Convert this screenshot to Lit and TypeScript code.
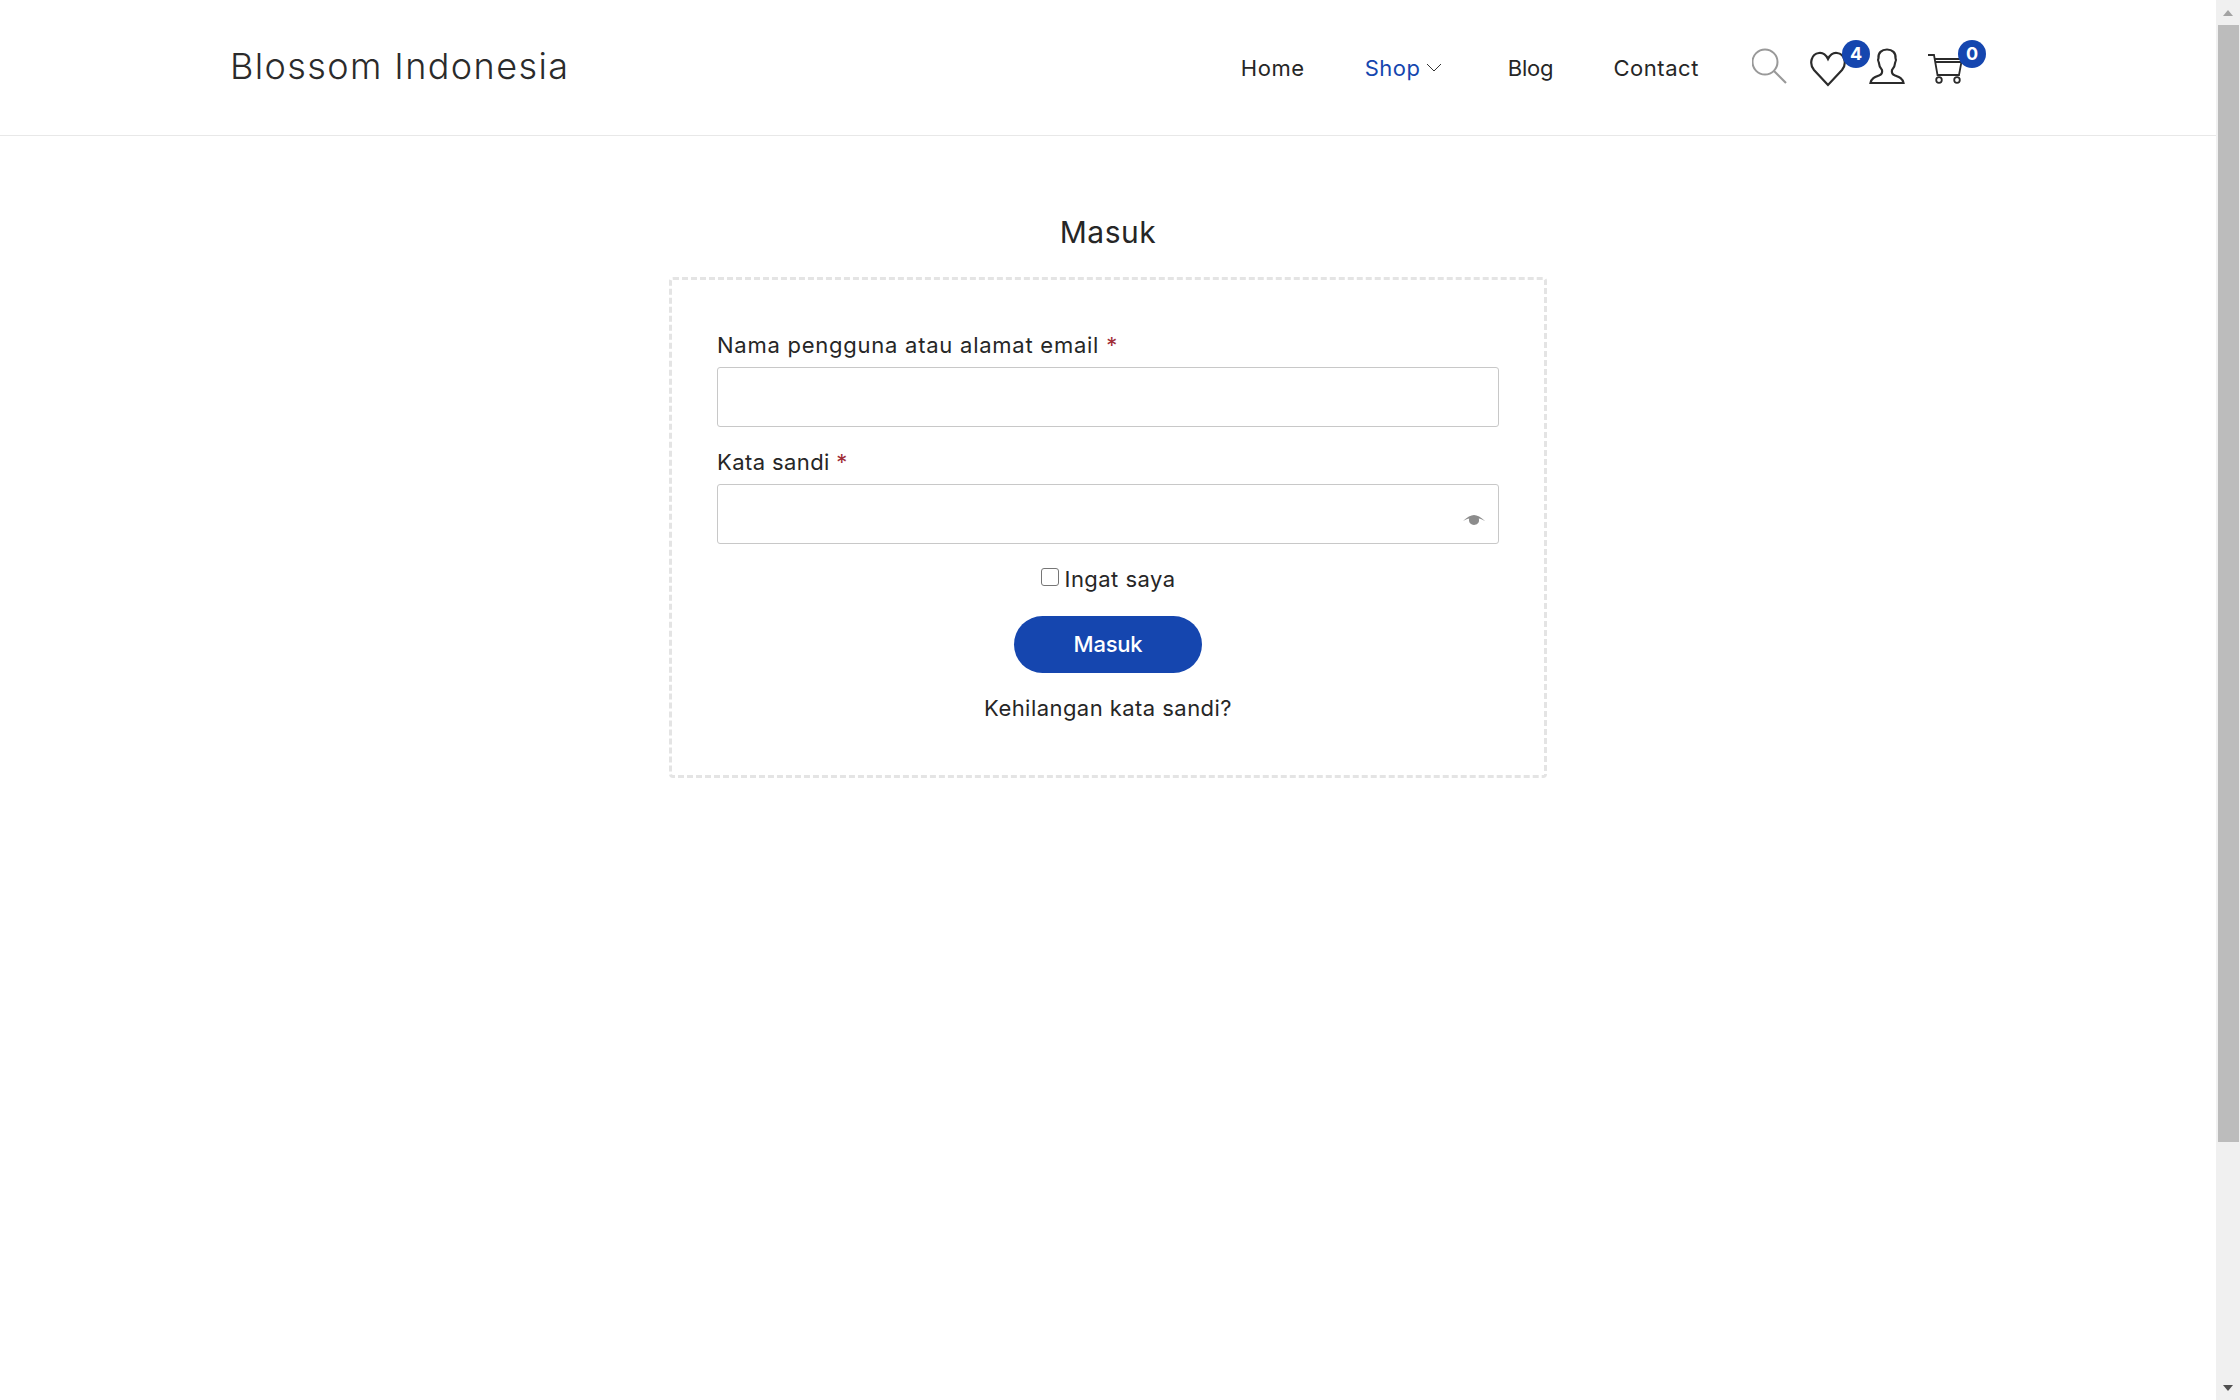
import { LitElement, html, css } from "lit";
import { customElement } from "lit/decorators.js";

@customElement("app-root")
export class AppRoot extends LitElement {
  static styles = css`
    :host { display: flex; width: 2240px; height: 1400px; overflow: hidden; background: #fff; color: #262626; font-family: Inter, "Open Sans", sans-serif; font-size: 22px; font-weight: 400; }
    .page { flex: 1; min-width: 0; display: flex; flex-direction: column; }
    header { height: 135px; border-bottom: 1px solid #e8e8e8; display: flex; align-items: center; justify-content: space-between; padding: 0 253px 0 230px; }
    .logo { font-size: 36px; font-weight: 350; letter-spacing: 1.4px; color: #2b2b2b; margin-top: -3px; }
    .right { display: flex; align-items: center; }
    nav { display: flex; align-items: center; }
    nav a { padding: 0 30px; letter-spacing: 0.55px; display: flex; align-items: center; }
    nav a.on { color: #1546af; }
    nav a.tight { letter-spacing: -0.15px; }
    .chev { margin-left: 5px; margin-right: 6px; display: block; }
    .icons { display: flex; align-items: flex-start; margin-left: 23px; height: 40px; }
    .ic { position: relative; display: block; }
    .heart { width: 36px; margin-left: 22px; }
    .person { margin-left: 23px; }
    .cart { width: 36px; margin-left: 22px; }
    .ic svg { display: block; }
    .badge { position: absolute; top: -8px; width: 28px; height: 28px; border-radius: 50%; background: #1546af; color: #fff; font-size: 18px; font-weight: 700; display: flex; align-items: center; justify-content: center; }
    .heart .badge { left: 32px; }
    .cart .badge { left: 31px; }
    main { display: flex; flex-direction: column; align-items: center; padding-top: 76px; }
    h1 { margin: 0 0 25px; font-size: 30px; line-height: 40px; font-weight: 400; letter-spacing: 0.5px; }
    .box { width: 878px; box-sizing: border-box; border: 3px dashed #e4e4e4; border-radius: 4px; padding: 48px 45px 49px; display: flex; flex-direction: column; }
    label { display: block; line-height: 34px; margin-bottom: 5px; letter-spacing: 0.75px; }
    label.tight { letter-spacing: 0.4px; }
    label b { color: #a02c35; font-weight: 400; }
    .field { position: relative; height: 60px; box-sizing: border-box; border: 1px solid #c8c8c8; border-radius: 3px; margin-bottom: 18px; background: #fff; }
    .eye { position: absolute; right: 13px; top: 30px; display: block; }
    .remember { display: flex; align-items: center; justify-content: center; line-height: 34px; gap: 6px; letter-spacing: 0.45px; margin-bottom: -1px; }
    .cb { width: 18px; height: 18px; box-sizing: border-box; border: 1.5px solid #767676; border-radius: 3px; margin-top: -4px; background: #fff; }
    .btn { align-self: center; margin-top: 21px; width: 188px; height: 57px; box-sizing: border-box; padding-bottom: 2px; border-radius: 29px; background: #1546af; color: #fff; display: flex; align-items: center; justify-content: center; font-weight: 450; letter-spacing: -0.2px; }
    .lost { margin-top: 18px; text-align: center; line-height: 34px; letter-spacing: 0.45px; padding-bottom: 1px; }
    aside { width: 24px; background: #f0f0f0; display: flex; flex-direction: column; align-items: center; }
    .up { margin-top: 10px; width: 0; height: 0; border-left: 5.5px solid transparent; border-right: 5.5px solid transparent; border-bottom: 6px solid #a3a3a3; }
    .thumb { margin: 9px 0 0 1px; width: 21px; height: 1117px; background: #bcbcbc; }
    .down { margin-top: 243px; width: 0; height: 0; border-left: 5.5px solid transparent; border-right: 5.5px solid transparent; border-top: 6px solid #505050; }
  `;

  render() {
    return html`
      <div class="page">
        <header>
          <div class="logo">Blossom Indonesia</div>
          <div class="right">
            <nav>
              <a>Home</a>
              <a class="on">Shop
                <svg class="chev" width="16" height="9" viewBox="0 0 16 9" fill="none" stroke="#333" stroke-width="1"><path d="M1 1l7 7 7-7"/></svg>
              </a>
              <a class="tight">Blog</a>
              <a>Contact</a>
            </nav>
            <div class="icons">
              <svg class="ic" width="36" height="40" viewBox="0 0 36 40" fill="none" stroke="#999" stroke-width="2"><circle cx="13" cy="14" r="12.5"/><path d="M22 23l12 12" stroke-width="2.2"/></svg>
              <div class="ic heart">
                <svg width="36" height="40" viewBox="0 0 36 40" fill="none" stroke="#2b2b2b" stroke-width="2.2"><path d="M18 37L4 22C-1 16 1 6 9 5c4-.5 7 2 9 6 2-4 5-6.500 9-6 8 1 10 11 5 17z"/></svg>
                <span class="badge">4</span>
              </div>
              <svg class="ic person" width="36" height="40" viewBox="0 0 36 40" fill="none" stroke="#2b2b2b" stroke-width="2.200"><path d="M1.500 35C2.500 30 6 29 10 27.500 13 26.500 13.500 24.500 13 22 11 20 10 17 9.800 14.500 8.800 13 9 11 9.500 10 9 5 12.500 1.500 18 1.500S27 5 26.500 10C27 11 27.200 13 26.200 14.500 26 17 25 20 23 22 22.500 24.500 23 26.500 26 27.500 30 29 33.500 30 34.500 35Z"/></svg>
              <div class="ic cart">
                <svg width="36" height="40" viewBox="0 0 36 40" fill="none" stroke="#2b2b2b" stroke-width="1.800"><path d="M1 7h6l3.500 20h21.500l3-16H8M8.500 14H34.500"/><circle cx="12" cy="32" r="2.800"/><circle cx="30" cy="32" r="2.800"/></svg>
                <span class="badge">0</span>
              </div>
            </div>
          </div>
        </header>
        <main>
          <h1>Masuk</h1>
          <div class="box">
            <label>Nama pengguna atau alamat email <b>*</b></label>
            <div class="field"></div>
            <label class="tight">Kata sandi <b>*</b></label>
            <div class="field">
              <svg class="eye" width="22" height="10" viewBox="0 0 22 10" fill="#8c8c8c"><path d="M0 6C4 2 8 0 11 0s7 2 11 6C19 4.500 17.500 4 15.800 3.600c.2.600.2 1.400.2 2C16 8 14 10 11 10S6 8 6 5.600c0-.6 0-1.400.2-2C4.500 4 3 4.500 0 6z"/></svg>
            </div>
            <div class="remember"><span class="cb"></span><span>Ingat saya</span></div>
            <div class="btn">Masuk</div>
            <div class="lost">Kehilangan kata sandi?</div>
          </div>
        </main>
      </div>
      <aside><div class="up"></div><div class="thumb"></div><div class="down"></div></aside>
    `;
  }
}
